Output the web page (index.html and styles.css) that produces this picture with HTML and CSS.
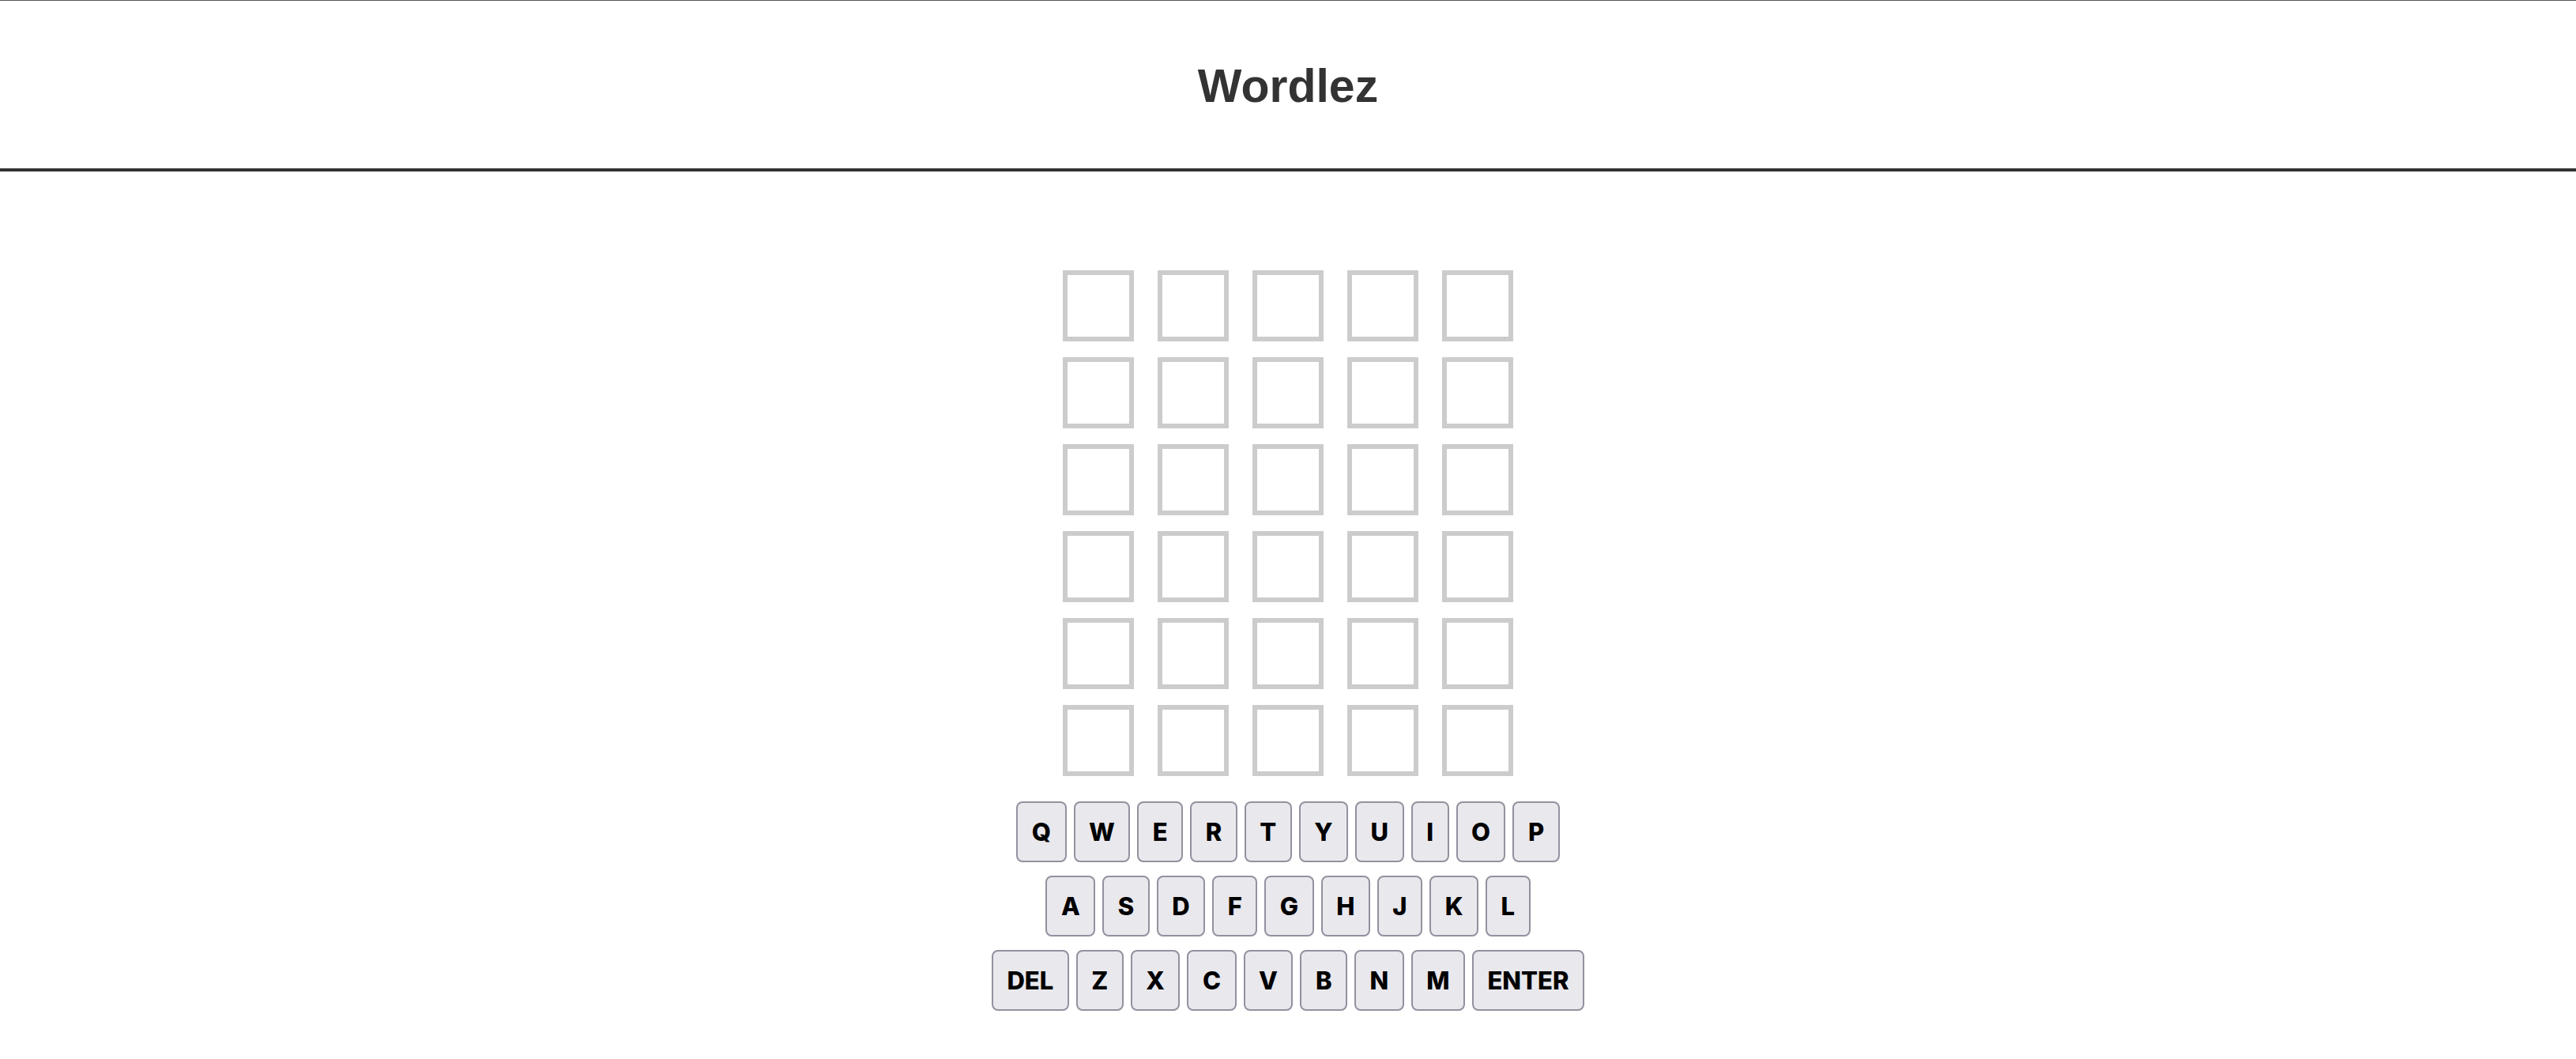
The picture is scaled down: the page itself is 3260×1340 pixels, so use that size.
FILE: index.html
```html
<!DOCTYPE html>
<html lang="en">
<head>
<meta charset="utf-8">
<title>Wordlez</title>
<link rel="stylesheet" href="styles.css">
</head>
<body>
<header class="header">
  <h1 class="title">Wordlez</h1>
</header>
<main class="game">
  <div class="board">
    <div class="tile"></div><div class="tile"></div><div class="tile"></div><div class="tile"></div><div class="tile"></div>
    <div class="tile"></div><div class="tile"></div><div class="tile"></div><div class="tile"></div><div class="tile"></div>
    <div class="tile"></div><div class="tile"></div><div class="tile"></div><div class="tile"></div><div class="tile"></div>
    <div class="tile"></div><div class="tile"></div><div class="tile"></div><div class="tile"></div><div class="tile"></div>
    <div class="tile"></div><div class="tile"></div><div class="tile"></div><div class="tile"></div><div class="tile"></div>
    <div class="tile"></div><div class="tile"></div><div class="tile"></div><div class="tile"></div><div class="tile"></div>
  </div>
  <div class="keyboard">
    <div class="key-row">
      <button class="key">Q</button><button class="key">W</button><button class="key">E</button><button class="key">R</button><button class="key">T</button><button class="key">Y</button><button class="key">U</button><button class="key">I</button><button class="key">O</button><button class="key">P</button>
    </div>
    <div class="key-row">
      <button class="key">A</button><button class="key">S</button><button class="key">D</button><button class="key">F</button><button class="key">G</button><button class="key">H</button><button class="key">J</button><button class="key">K</button><button class="key">L</button>
    </div>
    <div class="key-row">
      <button class="key">DEL</button><button class="key">Z</button><button class="key">X</button><button class="key">C</button><button class="key">V</button><button class="key">B</button><button class="key">N</button><button class="key">M</button><button class="key">ENTER</button>
    </div>
  </div>
</main>
</body>
</html>
```

FILE: styles.css
```css
html, body {
  margin: 0;
  padding: 0;
  background: #ffffff;
}

body {
  font-family: "Liberation Sans", Arial, sans-serif;
}

.header {
  box-sizing: border-box;
  height: 217px;
  padding-top: 4px;
  border-top: 1px solid #555555;
  border-bottom: 4px solid #333333;
  display: flex;
  align-items: center;
  justify-content: center;
}

.title {
  margin: 0;
  font-family: "Liberation Sans", Arial, sans-serif;
  font-weight: 700;
  font-size: 59px;
  line-height: 1;
  color: #333333;
}

.game {
  display: flex;
  flex-direction: column;
  align-items: center;
  padding-top: 125px;
}

.board {
  display: grid;
  grid-template-columns: repeat(5, 90px);
  grid-auto-rows: 90px;
  column-gap: 30px;
  row-gap: 20px;
}

.tile {
  box-sizing: border-box;
  border: 6px solid #cccccc;
  background: #ffffff;
}

.keyboard {
  margin-top: 32px;
  display: flex;
  flex-direction: column;
  align-items: center;
  gap: 17px;
}

.key-row {
  display: flex;
  gap: 9px;
}

.key {
  box-sizing: border-box;
  height: 77px;
  padding: 0 17.5px;
  margin: 0;
  border: 2px solid #93919f;
  border-radius: 8px;
  background: #e9e8ed;
  color: #000000;
  font-family: Inter, "Liberation Sans", sans-serif;
  font-weight: 800;
  font-size: 31px;
  line-height: 1;
}
```
